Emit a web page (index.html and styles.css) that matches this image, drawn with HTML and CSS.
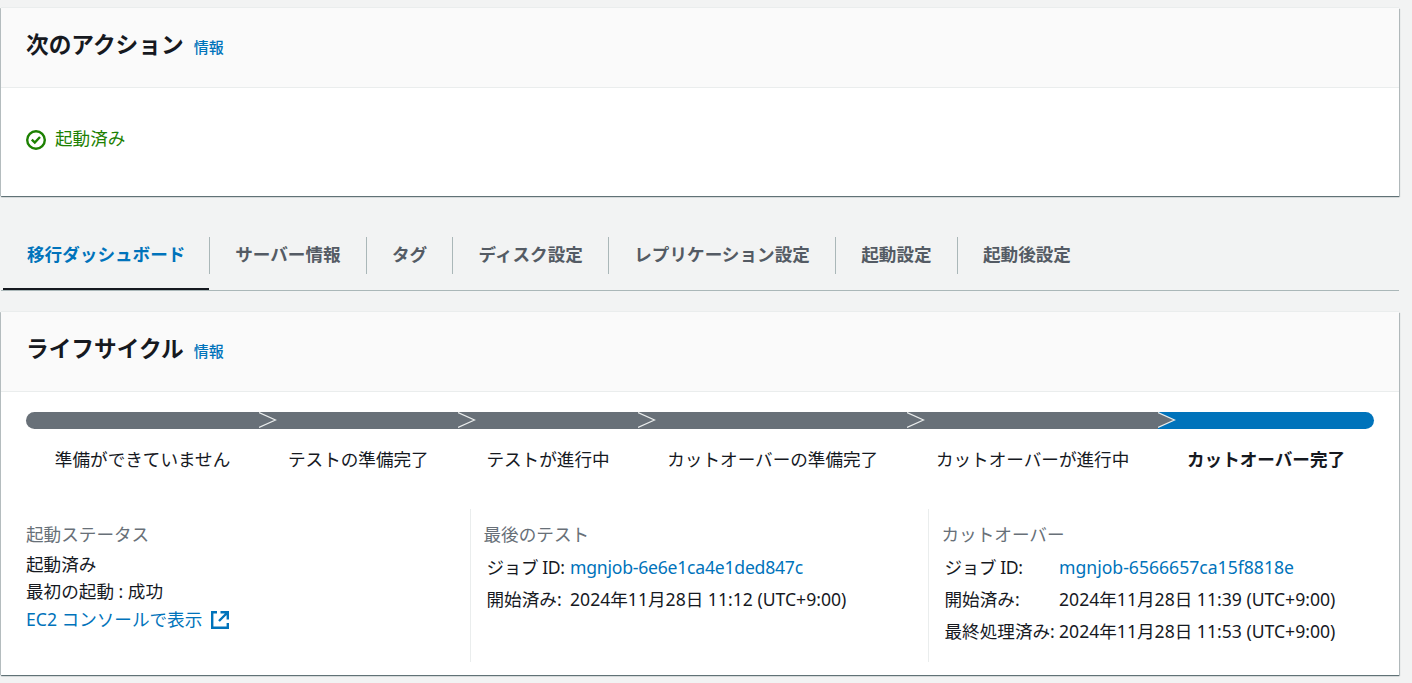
FILE: index.html
```html
<!DOCTYPE html>
<html lang="ja">
  <head>
    <meta charset="utf-8">
    <title>移行ダッシュボード</title>
    <link rel="stylesheet" href="styles.css">
  </head>
  <body>
    <main class="page">
      <section class="card next-actions">
        <div class="card-header">
          <h2>次のアクション</h2>
          <a class="info">情報</a>
        </div>
        <div class="status">
          <svg class="status-icon" viewBox="0 0 20 20">
            <circle cx="10" cy="10" r="8.8" />
            <path d="M5.8 9.6l3 3 5.2-5.6" />
          </svg>
          <span>起動済み</span>
        </div>
      </section>

      <nav class="tabs">
        <a class="tab active">移行ダッシュボード</a>
        <a class="tab">サーバー情報</a>
        <a class="tab">タグ</a>
        <a class="tab">ディスク設定</a>
        <a class="tab">レプリケーション設定</a>
        <a class="tab">起動設定</a>
        <a class="tab">起動後設定</a>
      </nav>

      <section class="card lifecycle">
        <div class="card-header">
          <h2>ライフサイクル</h2>
          <a class="info">情報</a>
        </div>
        <div class="steps">
          <div class="step">
            <div class="bar"></div>
            <span>準備ができていません</span>
          </div>
          <div class="step">
            <div class="bar"><svg class="arrow" viewBox="0 0 18 17"><path d="M0 .5L16.5 8 0 15.5" /></svg></div>
            <span>テストの準備完了</span>
          </div>
          <div class="step">
            <div class="bar"><svg class="arrow" viewBox="0 0 18 17"><path d="M0 .5L16.5 8 0 15.5" /></svg></div>
            <span>テストが進行中</span>
          </div>
          <div class="step">
            <div class="bar"><svg class="arrow" viewBox="0 0 18 17"><path d="M0 .5L16.5 8 0 15.5" /></svg></div>
            <span>カットオーバーの準備完了</span>
          </div>
          <div class="step">
            <div class="bar"><svg class="arrow" viewBox="0 0 18 17"><path d="M0 .5L16.5 8 0 15.5" /></svg></div>
            <span>カットオーバーが進行中</span>
          </div>
          <div class="step current">
            <div class="bar"><svg class="arrow" viewBox="0 0 18 17"><path d="M0 .5L16.5 8 0 15.5" /></svg></div>
            <span>カットオーバー完了</span>
          </div>
        </div>

        <div class="columns">
          <div class="column">
            <div class="label">起動ステータス</div>
            <div class="launch-status">起動済み</div>
            <div class="first-boot">最初の起動 : 成功</div>
            <a class="link console-link">EC2 コンソールで表示
              <svg class="external" viewBox="0 0 18 18">
                <path d="M6 1.2H1.2v15.6h15.6V12" />
                <path d="M9.5 1.2h7.3v7.3M16.5 1.5L8 10" />
              </svg>
            </a>
          </div>
          <div class="column">
            <div class="label">最後のテスト</div>
            <dl class="details test-details">
              <dt class="job">ジョブ ID:</dt><dd><a class="link">mgnjob-6e6e1ca4e1ded847c</a></dd>
              <dt>開始済み:</dt><dd>2024年11月28日 11:12 (UTC+9:00)</dd>
            </dl>
          </div>
          <div class="column">
            <div class="label">カットオーバー</div>
            <dl class="details cutover-details">
              <dt class="job">ジョブ ID:</dt><dd><a class="link">mgnjob-6566657ca15f8818e</a></dd>
              <dt>開始済み:</dt><dd>2024年11月28日 11:39 (UTC+9:00)</dd>
              <dt>最終処理済み:</dt><dd>2024年11月28日 11:53 (UTC+9:00)</dd>
            </dl>
          </div>
        </div>
      </section>
    </main>
  </body>
</html>
```
FILE: styles.css
```css
* {
  box-sizing: border-box;
}
body {
  margin: 0;
  height: 683px;
  overflow: hidden;
  background-color: #f2f3f3;
  color: #16191f;
  font-family: "Noto Sans", "Noto Sans CJK JP", sans-serif;
  font-size: 17.6px;
  line-height: 28px;
}
.page {
  width: 1398px;
  margin-left: 1px;
  padding-top: 8px;
}
.card {
  background-color: #fff;
  box-shadow: 0 1px 1px 0 rgba(0, 28, 36, 0.5), 1px 1px 1px 0 rgba(0, 28, 36, 0.2), -1px 0 0 0 #c5cccd, 0 -1px 0 0 #eaeded;
}
.card-header {
  display: flex;
  align-items: baseline;
  gap: 10px;
  height: 80px;
  padding: 20px 25px;
  background-color: #fafafa;
  border-bottom: 1px solid #eaeded;
}
h2 {
  margin: 0;
  font-size: 22.7px;
  font-weight: 700;
  line-height: 34px;
}
.info {
  color: #0073bb;
  font-size: 15px;
  font-weight: 500;
}
.next-actions {
  height: 188px;
}
.status {
  display: flex;
  align-items: center;
  gap: 9px;
  padding: 36px 25px;
  color: #1d8102;
}
.status-icon {
  width: 20px;
  height: 20px;
  margin-top: 3px;
  fill: none;
  stroke: #1d8102;
  stroke-width: 2.4;
}

/* Tabs */
.tabs {
  display: flex;
  height: 54px;
  margin: 41px 0 21px;
  border-bottom: 1px solid #aab7b8;
}
.tab {
  height: 37px;
  padding: 3px 25.2px;
  border-left: 1px solid #aab7b8;
  color: #545b64;
  font-weight: 700;
}
.tab.active {
  width: 206px;
  height: 53px;
  margin-left: 2px;
  padding: 3px 0 0 24px;
  border-left: none;
  border-bottom: 2px solid #16191f;
  color: #0073bb;
}

/* Lifecycle */
.lifecycle {
  height: 363px;
}
.steps {
  display: flex;
  padding: 20px 25px 0;
}
.step {
  flex: 1 0 auto;
  text-align: center;
}
.step span {
  display: block;
  padding: 0 28.8px;
  margin-top: 16px;
}
.bar {
  height: 17px;
  background-color: #687078;
}
.step:first-child .bar {
  border-radius: 9px 0 0 9px;
}
.current .bar {
  background-color: #0073bb;
  border-radius: 0 9px 9px 0;
}
.current span {
  font-weight: 700;
}
.arrow {
  display: block;
  width: 18px;
  height: 17px;
  fill: #687078;
  stroke: #eaeded;
  stroke-width: 1.2;
}
.columns {
  display: grid;
  grid-template-columns: 444px 458px 1fr;
  height: 153px;
  margin: 36px 0 0 25px;
}
.column {
  padding-top: 11px;
}
.column + .column {
  padding-left: 12.5px;
  border-left: 1px solid #eaeded;
}
.label {
  color: #687078;
}
.launch-status {
  margin-top: 2px;
}
.first-boot {
  margin-top: -1px;
}
.link {
  color: #0073bb;
}
.console-link {
  display: flex;
  align-items: center;
  gap: 9px;
}
.external {
  width: 18px;
  height: 18px;
  margin-top: 2px;
  fill: none;
  stroke: #0073bb;
  stroke-width: 2.4;
}
.details {
  display: grid;
  grid-auto-rows: 32px;
  margin: 3px 0 0 3px;
  line-height: 32px;
  white-space: nowrap;
}
.test-details {
  grid-template-columns: 83.5px 1fr;
}
.test-details .link {
  letter-spacing: -0.23px;
}
.job {
  letter-spacing: -0.4px;
}
.cutover-details {
  grid-template-columns: 114.5px 1fr;
}
dd {
  margin: 0;
}
```
